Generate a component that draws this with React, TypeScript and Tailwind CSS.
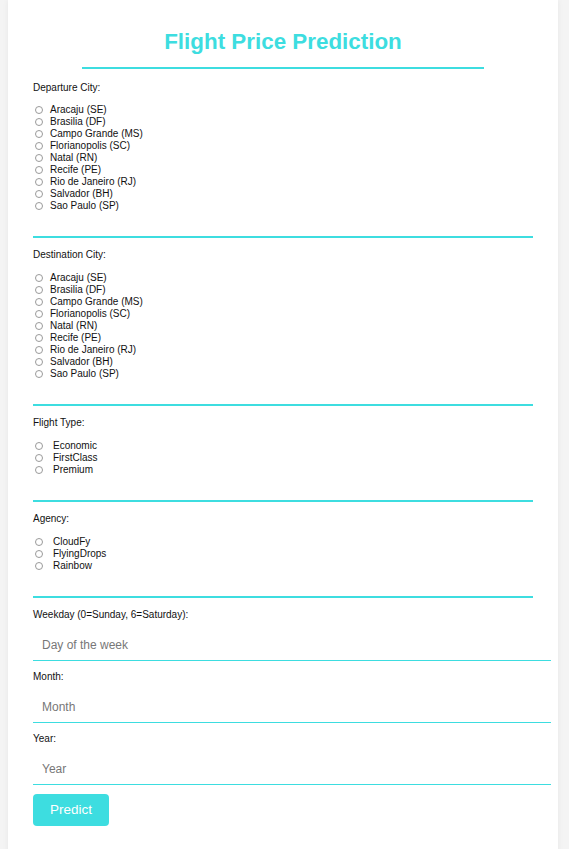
const cities = [
  'Aracaju (SE)',
  'Brasilia (DF)',
  'Campo Grande (MS)',
  'Florianopolis (SC)',
  'Natal (RN)',
  'Recife (PE)',
  'Rio de Janeiro (RJ)',
  'Salvador (BH)',
  'Sao Paulo (SP)',
];

const flightTypes = ['Economic', 'FirstClass', 'Premium'];
const agencies = ['CloudFy', 'FlyingDrops', 'Rainbow'];

function RadioGroup({ label, options, wide, first }: { label: string; options: string[]; wide?: boolean; first?: boolean }) {
  return (
    <div>
      <p className="text-[10px] leading-[12px] text-[#111]">{label}</p>
      <div className={first ? 'mt-[10px]' : 'mt-[11px]'}>
        {options.map((opt) => (
          <label key={opt} className="flex items-center h-[12px] text-[10px] leading-[12px] text-[#111]">
            <span className="ml-[2px] w-[8px] h-[8px] rounded-full border border-[#9a9a9a] bg-white shrink-0" />
            <span className={wide ? 'ml-[10px]' : 'ml-[7px]'}>{opt}</span>
          </label>
        ))}
      </div>
    </div>
  );
}

function Divider() {
  return <div className="mt-[24px] mb-[11px] h-[2px] bg-[#3ddde0] w-full" />;
}

function Field({ label, placeholder }: { label: string; placeholder: string }) {
  return (
    <div>
      <p className="text-[10px] leading-[12px] text-[#111]">{label}</p>
      <input
        placeholder={placeholder}
        className="mt-[4px] block w-[518px] h-[36px] px-[9px] pt-[5px] border-0 border-b border-solid border-b-[#3ddde0] text-[12px] outline-none placeholder:text-[#777]"
      />
    </div>
  );
}

export default function App() {
  return (
    <div className="min-h-screen bg-[#f4f4f4] font-['Liberation_Sans',Arial,sans-serif]">
      <div className="ml-[8px] w-[550px] min-h-[849px] bg-white shadow-[0_0_6px_rgba(0,0,0,0.06)] px-[25px] pt-[29px] pb-10">
        <h1 className="text-center text-[22.4px] leading-[26px] font-bold text-[#3ddde0]">Flight Price Prediction</h1>
        <div className="mx-auto mt-[12px] w-[402px] h-[2px] bg-[#3ddde0]" />

        <div className="mt-[13px]">
          <RadioGroup label="Departure City:" options={cities} first />
        </div>
        <Divider />
        <RadioGroup label="Destination City:" options={cities} />
        <Divider />
        <RadioGroup label="Flight Type:" options={flightTypes} wide />
        <Divider />
        <RadioGroup label="Agency:" options={agencies} wide />
        <Divider />

        <div className="mt-[2px] flex flex-col gap-[10px]">
          <Field label="Weekday (0=Sunday, 6=Saturday):" placeholder="Day of the week" />
          <Field label="Month:" placeholder="Month" />
          <Field label="Year:" placeholder="Year" />
        </div>

        <button className="mt-[9px] w-[76px] h-[32px] rounded-[4px] bg-[#3ddde0] text-white text-[13.5px]">Predict</button>
      </div>
    </div>
  );
}
